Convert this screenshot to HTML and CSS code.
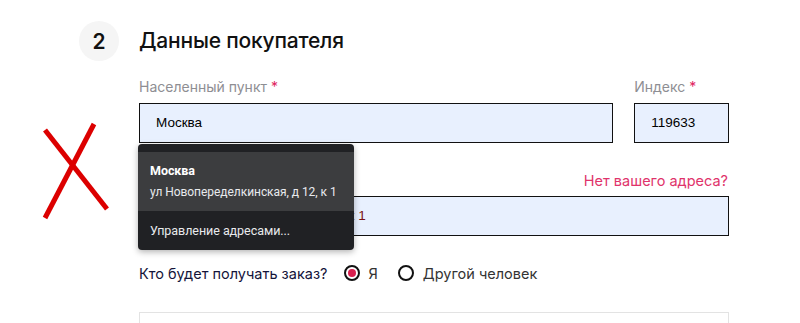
FILE: index.html
```html
<html lang="ru">
<head>
    <meta charset="UTF-8">
    <title>Данные покупателя</title>
    <link rel="stylesheet" href="styles.css">
</head>
<body>
    <div class="step">
        <div class="step-num">2</div>
        <div class="step-body">
            <h2 class="step-title">Данные покупателя</h2>

            <div class="row">
                <div class="field field-city">
                    <label class="label">Населенный пункт <span class="req">*</span></label>
                    <div class="input-wrap">
                        <div class="input">Москва</div>
                        <div class="autofill">
                            <div class="autofill-item">
                                <div class="af-title">Москва</div>
                                <div class="af-sub">ул Новопеределкинская, д 12, к 1</div>
                            </div>
                            <div class="autofill-manage">Управление адресами...</div>
                        </div>
                    </div>
                </div>
                <div class="field field-index">
                    <label class="label">Индекс <span class="req">*</span></label>
                    <div class="input">119633</div>
                </div>
            </div>

            <div class="field field-address">
                <div class="label-row">
                    <a class="no-address">Нет вашего адреса?</a>
                </div>
                <div class="input input-preview">ул Новопеределкинская, д 12, к 1</div>
            </div>

            <div class="receiver">
                <span class="receiver-q">Кто будет получать заказ?</span>
                <span class="radio checked"></span><span class="radio-text">Я</span>
                <span class="radio"></span><span class="radio-text">Другой человек</span>
            </div>

            <div class="next-box"></div>
        </div>
    </div>

    <svg class="cross" width="80" height="110" viewBox="0 0 80 110">
        <line x1="9" y1="20" x2="71" y2="99" stroke="#dc0000" stroke-width="5"/>
        <line x1="58" y1="14" x2="9" y2="108" stroke="#dc0000" stroke-width="5"/>
    </svg>
</body>
</html>
```

FILE: styles.css
```css
body {
    margin: 0;
    background: #fff;
    font-family: Inter, "Open Sans", sans-serif;
    color: #111;
    position: relative;
    height: 323px;
    overflow: hidden;
}
.step {
    display: grid;
    grid-template-columns: 60px 590px;
    padding: 21px 0 0 79px;
}
.step-num {
    width: 40px;
    height: 40px;
    border-radius: 50%;
    background: #f5f5f5;
    display: flex;
    align-items: center;
    justify-content: center;
    font-size: 21px;
    font-weight: 600;
}
.step-title {
    margin: 0;
    height: 40px;
    line-height: 40px;
    font-size: 21px;
    font-weight: 500;
    letter-spacing: -0.2px;
}
.row {
    display: flex;
    gap: 21px;
    margin-top: 16px;
}
.field-city {
    width: 475px;
}
.field-index {
    width: 95px;
}
.label {
    display: block;
    height: 20px;
    line-height: 20px;
    font-size: 14px;
    color: #8e8e93;
    margin-bottom: 6px;
}
.req {
    color: #e0245e;
}
.input-wrap {
    position: relative;
}
.input {
    box-sizing: border-box;
    height: 40px;
    border: 1px solid #111;
    background: #e8f0fe;
    padding: 0 16px;
    line-height: 38px;
    font-family: "Liberation Sans", Arial, sans-serif;
    font-size: 13.5px;
    color: #000;
    white-space: nowrap;
    overflow: hidden;
}
.autofill {
    position: absolute;
    left: -1px;
    top: 41px;
    width: 216px;
    background: #202124;
    border-radius: 4px;
    padding-top: 8px;
    box-shadow: 0 2px 6px rgba(0,0,0,0.3);
    z-index: 2;
    font-family: Roboto, "Noto Sans", sans-serif;
    font-size: 12px;
    letter-spacing: -0.05px;
    color: #e8eaed;
    white-space: nowrap;
    overflow: hidden;
}
.autofill-item {
    background: #3c3d3f;
    padding: 9px 12px 0;
    height: 50px;
}
.af-title {
    font-weight: 700;
    font-size: 12.5px;
    line-height: 19px;
    color: #fff;
}
.af-sub {
    line-height: 24px;
}
.autofill-manage {
    height: 39px;
    line-height: 40px;
    padding: 0 12px;
    font-size: 12.5px;
}
.field-address {
    margin-top: 28px;
}
.label-row {
    display: flex;
    justify-content: flex-end;
    margin-bottom: 5px;
}
.no-address {
    font-size: 14.5px;
    line-height: 20px;
    color: #e0336b;
    margin-right: 1px;
}
.input-preview {
    color: #7a1010;
}
.receiver {
    display: flex;
    align-items: center;
    margin-top: 27px;
    height: 20px;
    font-size: 14.5px;
    color: #14143a;
}
.receiver-q {
    margin-right: 16px;
}
.radio {
    box-sizing: border-box;
    width: 16px;
    height: 16px;
    border: 2px solid #111;
    border-radius: 50%;
    margin-right: 9px;
    position: relative;
}
.radio.checked::after {
    content: "";
    position: absolute;
    left: 2px;
    top: 2px;
    width: 8px;
    height: 8px;
    border-radius: 50%;
    background: #d81f4e;
}
.radio-text {
    margin-right: 20px;
    color: #333;
}
.next-box {
    margin-top: 29px;
    height: 10px;
    border: 1px solid #e3e3e3;
    border-bottom: none;
}
.cross {
    position: absolute;
    left: 36px;
    top: 110px;
}
```
